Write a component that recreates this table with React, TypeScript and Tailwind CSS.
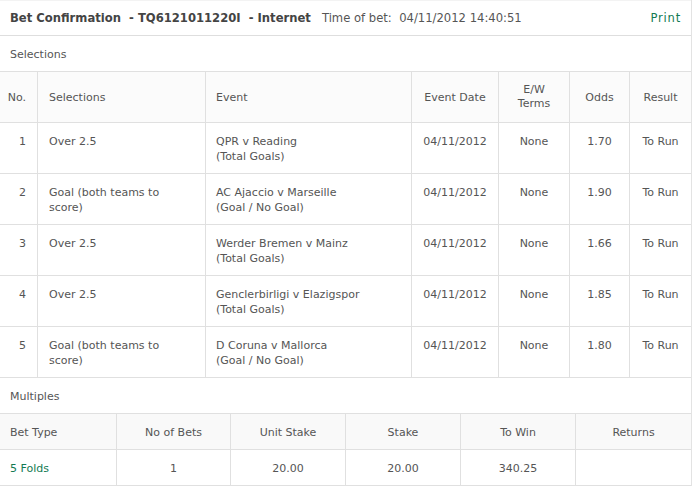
import React from "react";

const sel = [
  { no: 1, s: "Over 2.5", e1: "QPR v Reading", e2: "(Total Goals)", odds: "1.70" },
  { no: 2, s: "Goal (both teams to score)", e1: "AC Ajaccio v Marseille", e2: "(Goal / No Goal)", odds: "1.90" },
  { no: 3, s: "Over 2.5", e1: "Werder Bremen v Mainz", e2: "(Total Goals)", odds: "1.66" },
  { no: 4, s: "Over 2.5", e1: "Genclerbirligi v Elazigspor", e2: "(Total Goals)", odds: "1.85" },
  { no: 5, s: "Goal (both teams to score)", e1: "D Coruna v Mallorca", e2: "(Goal / No Goal)", odds: "1.80" },
];

const grid = "grid grid-cols-[37px_168px_206px_87px_71px_60px_62px]";
const mgrid = "grid grid-cols-[116px_114px_115px_115px_115px_116px]";

export default function App() {
  return (
    <div
      className="w-[692px] bg-white text-[11px] leading-[15px] text-[#555] border-r border-[#e3e3e3]"
      style={{ fontFamily: '"DejaVu Sans", Verdana, sans-serif' }}
    >
      {/* Header */}
      <div className="h-[36px] border-t border-t-[#f3f3f3] border-b border-b-[#dedede] flex items-center pl-[10px] pr-[10px] pt-[1px]">
        <span className="font-bold text-[11.6px] text-[#444] whitespace-pre">
          Bet Confirmation  - TQ6121011220I  - Internet
        </span>
        <span className="ml-[11px] text-[11.6px] text-[#555] whitespace-pre">Time of bet:  04/11/2012 14:40:51</span>
        <span className="ml-auto text-[11.5px] tracking-[0.8px] text-[#127a52]">Print</span>
      </div>

      {/* Selections label */}
      <div className="h-[35px] flex items-center pl-[10px] pt-[2px]">Selections</div>

      {/* Selections table */}
      <div className="border-t border-[#e0e0e0]">
        <div className={`${grid} h-[51px] border-b border-[#e0e0e0] bg-[#fbfbfb]`}>
          <div className="flex items-center justify-end pr-[11px] pt-[1px]">No.</div>
          <div className="flex items-center pl-[11px] pt-[1px] border-l border-[#e0e0e0]">Selections</div>
          <div className="flex items-center pl-[10px] pt-[1px] border-l border-[#e0e0e0]">Event</div>
          <div className="flex items-center justify-center pt-[1px] border-l border-[#e0e0e0]">Event Date</div>
          <div className="flex items-center justify-center text-center leading-[14px] border-l border-[#e0e0e0]">
            E/W
            <br />
            Terms
          </div>
          <div className="flex items-center justify-center pt-[1px] border-l border-[#e0e0e0]">Odds</div>
          <div className="flex items-center justify-center pt-[1px] border-l border-[#e0e0e0]">Result</div>
        </div>
        {sel.map((r) => (
          <div key={r.no} className={`${grid} h-[51px] border-b border-[#e0e0e0]`}>
            <div className="pt-[11px] text-right pr-[11px]">{r.no}</div>
            <div className="pt-[11px] pl-[11px] pr-[13px] border-l border-[#e0e0e0]">{r.s}</div>
            <div className="pt-[11px] pl-[10px] border-l border-[#e0e0e0]">
              <div>{r.e1}</div>
              <div>{r.e2}</div>
            </div>
            <div className="pt-[11px] text-center border-l border-[#e0e0e0]">04/11/2012</div>
            <div className="pt-[11px] text-center border-l border-[#e0e0e0]">None</div>
            <div className="pt-[11px] text-center border-l border-[#e0e0e0]">{r.odds}</div>
            <div className="pt-[11px] text-center border-l border-[#e0e0e0]">To Run</div>
          </div>
        ))}
      </div>

      {/* Multiples label */}
      <div className="h-[35px] flex items-center pl-[10px] pt-[2px]">Multiples</div>

      {/* Multiples table */}
      <div className="border-t border-[#e0e0e0]">
        <div className={`${mgrid} h-[36px] border-b border-[#e0e0e0] bg-[#f9f9f9]`}>
          <div className="flex items-center pl-[10px] pt-[1px]">Bet Type</div>
          <div className="flex items-center justify-center pt-[1px] border-l border-[#e0e0e0]">No of Bets</div>
          <div className="flex items-center justify-center pt-[1px] border-l border-[#e0e0e0]">Unit Stake</div>
          <div className="flex items-center justify-center pt-[1px] border-l border-[#e0e0e0]">Stake</div>
          <div className="flex items-center justify-center pt-[1px] border-l border-[#e0e0e0]">To Win</div>
          <div className="flex items-center justify-center pt-[1px] border-l border-[#e0e0e0]">Returns</div>
        </div>
        <div className={`${mgrid} h-[36px] border-b border-[#e0e0e0]`}>
          <div className="flex items-center pl-[10px] pt-[1px] text-[#127a52]">5 Folds</div>
          <div className="flex items-center justify-center pt-[1px] border-l border-[#e0e0e0]">1</div>
          <div className="flex items-center justify-center pt-[1px] border-l border-[#e0e0e0]">20.00</div>
          <div className="flex items-center justify-center pt-[1px] border-l border-[#e0e0e0]">20.00</div>
          <div className="flex items-center justify-center pt-[1px] border-l border-[#e0e0e0]">340.25</div>
          <div className="flex items-center justify-center pt-[1px] border-l border-[#e0e0e0]"></div>
        </div>
      </div>
    </div>
  );
}
